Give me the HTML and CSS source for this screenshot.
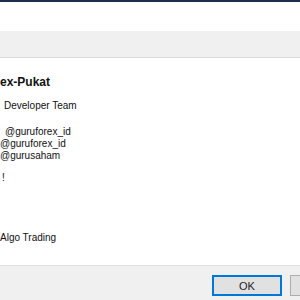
FILE: index.html
```html
<!DOCTYPE html>
<html lang="en">
<head>
    <meta charset="UTF-8">
    <title>About</title>
    <link rel="stylesheet" href="styles.css">
</head>
<body>
    <div class="window">
        <!-- barra de titulo -->
        <div class="titlebar"></div>
        <div class="top"></div>
        <div class="band"></div>

        <!-- contenido -->
        <div class="content">
            <p class="title">ex-Pukat</p>
            <p class="team">Developer Team</p>
            <p class="contact first">@guruforex_id</p>
            <p class="contact second">@guruforex_id</p>
            <p class="contact third">@gurusaham</p>
            <p class="bang">!</p>
            <p class="algo">Algo Trading</p>
        </div>

        <!-- botones -->
        <div class="footer">
            <button class="btn default">OK</button>
            <button class="btn"></button>
        </div>
    </div>
</body>
</html>
```

FILE: styles.css
```css
* {
    margin: 0px;
    padding: 0px;
    box-sizing: border-box;
}
html, body {
    width: 300px;
    height: 300px;
    overflow: hidden;
    background-color: white;
}
.window {
    display: flex;
    flex-direction: column;
    height: 300px;
    font-family: "Liberation Sans", Arial, sans-serif;
    font-size: 10px;
    color: #111111;
}
.titlebar {
    height: 2px;
    background-color: #1d2e4e;
}
.top {
    height: 29px;
    background-color: white;
}
.band {
    height: 27px;
    background-color: #f0f0f0;
    border-bottom: 1px solid #dadada;
}
.content {
    flex: 1;
    padding-top: 17px;
    line-height: 12px;
    background-color: white;
    white-space: nowrap;
}
.title {
    font-size: 12px;
    font-weight: bold;
    line-height: 14px;
}
.team {
    margin-top: 11px;
    margin-left: 4px;
}
.contact.first {
    margin-top: 14px;
    margin-left: 5px;
}
.contact.second {
    margin-left: 0px;
}
.contact.third {
    margin-left: 0px;
}
.bang {
    margin-top: 10px;
    margin-left: 2px;
}
.algo {
    margin-top: 48px;
    margin-left: 0px;
}
.footer {
    height: 35px;
    display: flex;
    gap: 8px;
    padding-top: 9px;
    padding-left: 212px;
    background-color: #f0f0f0;
    border-top: 1px solid #dfdfdf;
}
.btn {
    flex: none;
    width: 70px;
    height: 21px;
    background-color: #e1e1e1;
    border: 1px solid #adadad;
    font-family: "Liberation Sans", Arial, sans-serif;
    font-size: 11px;
    color: #222222;
}
.btn.default {
    border: 2px solid #0078d7;
}
```
